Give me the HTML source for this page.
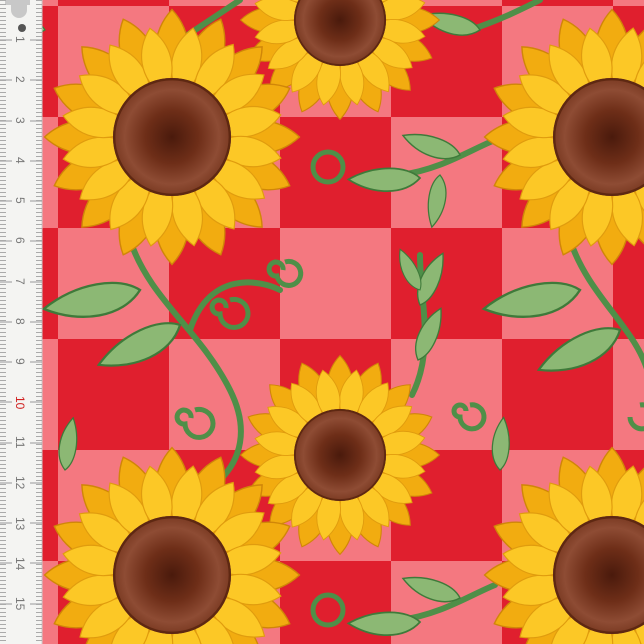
<!DOCTYPE html>
<html><head><style>
html,body{margin:0;padding:0;width:644px;height:644px;overflow:hidden;background:#e01f2e}
svg{position:absolute;left:0;top:0}
</style></head><body>
<svg width="644" height="644" viewBox="0 0 644 644" xmlns="http://www.w3.org/2000/svg">
<defs>
<pattern id="chk" x="58" y="6" width="222" height="222" patternUnits="userSpaceOnUse">
<rect width="222" height="222" fill="#e01f2e"/>
<rect x="0" y="0" width="111" height="111" fill="#f47880"/>
<rect x="111" y="111" width="111" height="111" fill="#f47880"/>
</pattern>
<radialGradient id="ctr"><stop offset="0" stop-color="#4a1a0c"/><stop offset="0.45" stop-color="#6e2e18"/><stop offset="0.8" stop-color="#8e4c34"/><stop offset="1" stop-color="#7a3a22"/></radialGradient>
<path id="p" d="M0,-35 C-21,-60 -17,-90 0,-108 C17,-90 21,-60 0,-35Z" fill="#f2ac10" stroke="#d08608" stroke-width="1.2"/>
<path id="p2" d="M0,-35 C-18,-55 -15,-78 0,-94 C15,-78 18,-55 0,-35Z" fill="#fcc826" stroke="#e09c0e" stroke-width="1"/>
<g id="flower">
<g>
<use href="#p" transform="rotate(0)"/><use href="#p" transform="rotate(22.5)"/><use href="#p" transform="rotate(45)"/><use href="#p" transform="rotate(67.5)"/><use href="#p" transform="rotate(90)"/><use href="#p" transform="rotate(112.5)"/><use href="#p" transform="rotate(135)"/><use href="#p" transform="rotate(157.5)"/><use href="#p" transform="rotate(180)"/><use href="#p" transform="rotate(202.5)"/><use href="#p" transform="rotate(225)"/><use href="#p" transform="rotate(247.5)"/><use href="#p" transform="rotate(270)"/><use href="#p" transform="rotate(292.5)"/><use href="#p" transform="rotate(315)"/><use href="#p" transform="rotate(337.5)"/>
</g>
<g>
<use href="#p2" transform="rotate(11)"/><use href="#p2" transform="rotate(33.5)"/><use href="#p2" transform="rotate(56)"/><use href="#p2" transform="rotate(78.5)"/><use href="#p2" transform="rotate(101)"/><use href="#p2" transform="rotate(123.5)"/><use href="#p2" transform="rotate(146)"/><use href="#p2" transform="rotate(168.5)"/><use href="#p2" transform="rotate(191)"/><use href="#p2" transform="rotate(213.5)"/><use href="#p2" transform="rotate(236)"/><use href="#p2" transform="rotate(258.5)"/><use href="#p2" transform="rotate(281)"/><use href="#p2" transform="rotate(303.5)"/><use href="#p2" transform="rotate(326)"/><use href="#p2" transform="rotate(348.5)"/>
</g>
<circle r="50" fill="url(#ctr)"/>
<circle r="49" fill="none" stroke="#5e2812" stroke-width="2"/>
</g>
<path id="leaf" d="M0,0 C15,-20 48,-22 75,-8 C48,10 15,12 0,0Z" fill="#8cb874" stroke="#3f7a3a" stroke-width="1.8"/>
</defs>
<rect width="644" height="644" fill="url(#chk)"/>
<g fill="none" stroke="#4f8f48" stroke-width="6" stroke-linecap="round">
<path d="M130,240 C150,300 200,330 230,390 C250,430 240,460 220,480"/>
<path d="M190,330 C210,270 260,280 280,290"/>
<path d="M570,240 C590,300 640,330 650,380"/>
<path d="M412,395 C435,350 420,300 420,255"/>
<path d="M400,175 C440,170 470,150 495,140"/>
<path d="M400,620 C440,615 470,595 495,585"/>
<path d="M150,60 C180,40 210,20 240,0"/>
<path d="M470,30 C500,20 520,10 540,0"/>
</g>
<g fill="none" stroke="#4f8f48" stroke-width="5">
<circle cx="328" cy="167" r="15"/>
<circle cx="328" cy="610" r="15"/>
<path d="M285,262 a12,12 0 1 1 -8,14 a7,7 0 1 1 6,-6"/>
<path d="M230,300 a14,14 0 1 1 -10,14 a7,7 0 1 1 6,-6"/>
<path d="M195,410 a14,14 0 1 1 -10,14 a7,7 0 1 1 6,-6"/>
<path d="M470,405 a12,12 0 1 1 -10,12 a6,6 0 1 1 6,-6"/>
<path d="M640,405 a12,12 0 1 1 -10,12"/>
</g>
<use href="#leaf" transform="translate(140,290) rotate(175) scale(1.3)"/>
<use href="#leaf" transform="translate(180,325) rotate(160) scale(1.2)"/>
<use href="#leaf" transform="translate(580,290) rotate(175) scale(1.3)"/>
<use href="#leaf" transform="translate(620,330) rotate(160) scale(1.2)"/>
<use href="#leaf" transform="translate(420,178) rotate(185) scale(0.95)"/>
<use href="#leaf" transform="translate(460,155) rotate(205) scale(0.8)"/>
<use href="#leaf" transform="translate(440,175) rotate(105) scale(0.7)"/>
<use href="#leaf" transform="translate(420,305) rotate(-60) scale(0.75)"/>
<use href="#leaf" transform="translate(418,360) rotate(-60) scale(0.75)"/>
<use href="#leaf" transform="translate(420,290) rotate(-110) scale(0.6)"/>
<use href="#leaf" transform="translate(420,622) rotate(185) scale(0.95)"/>
<use href="#leaf" transform="translate(460,598) rotate(205) scale(0.8)"/>
<use href="#leaf" transform="translate(500,470) rotate(-80) scale(0.7)"/>
<use href="#leaf" transform="translate(65,470) rotate(-75) scale(0.7)"/>
<use href="#leaf" transform="translate(480,30) rotate(200) scale(0.8)"/>
<use href="#leaf" transform="translate(45,30) rotate(200) scale(0.7)"/>
<use href="#flower" transform="translate(340,20) scale(0.92)"/>
<use href="#flower" transform="translate(340,455) scale(0.92)"/>
<use href="#flower" transform="translate(172,137) scale(1.18)"/>
<use href="#flower" transform="translate(612,137) scale(1.18)"/>
<use href="#flower" transform="translate(172,575) scale(1.18)"/>
<use href="#flower" transform="translate(612,575) scale(1.18)"/>
<rect x="0" y="0" width="42" height="644" fill="#f4f4f2"/>
<line x1="42" y1="0" x2="42" y2="644" stroke="#ccc"/>
<path d="M5,0 H30 V5 H27 V10 a8,8 0 0 1 -16 0 V5 H5Z" fill="#c8c8c8"/>
<circle cx="22" cy="28" r="4" fill="#555"/>
<g font-family="Liberation Sans, sans-serif" font-size="12" fill="#777">
<text transform="translate(16,36) rotate(90)">1</text>
<text transform="translate(16,76) rotate(90)">2</text>
<text transform="translate(16,117) rotate(90)">3</text>
<text transform="translate(16,157) rotate(90)">4</text>
<text transform="translate(16,197) rotate(90)">5</text>
<text transform="translate(16,237) rotate(90)">6</text>
<text transform="translate(16,278) rotate(90)">7</text>
<text transform="translate(16,318) rotate(90)">8</text>
<text transform="translate(16,358) rotate(90)">9</text>
<text transform="translate(16,396) rotate(90)" fill="#d02020">10</text>
<text transform="translate(16,436) rotate(90)">11</text>
<text transform="translate(16,476) rotate(90)">12</text>
<text transform="translate(16,517) rotate(90)">13</text>
<text transform="translate(16,557) rotate(90)">14</text>
<text transform="translate(16,597) rotate(90)">15</text>
</g>
<g stroke="#999" stroke-width="1">
<path d="M0,40H12M0,80H12M0,121H12M0,161H12M0,201H12M0,241H12M0,282H12M0,322H12M0,362H12M0,402H12M0,443H12M0,483H12M0,523H12M0,563H12M0,604H12
M30,40H42M30,80H42M30,121H42M30,161H42M30,201H42M30,241H42M30,282H42M30,322H42M30,362H42M30,402H42M30,443H42M30,483H42M30,523H42M30,563H42M30,604H42"/>
<path stroke-dasharray="1 3" d="M3,0V644M39,0V644" stroke-width="6" stroke="#aaa"/>
</g>
</svg>
</body></html>
